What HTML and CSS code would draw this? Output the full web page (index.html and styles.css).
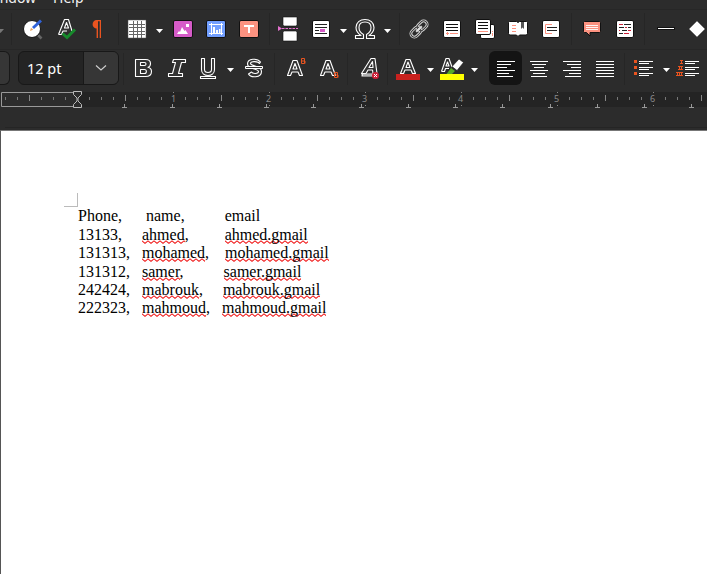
FILE: index.html
```
<!DOCTYPE html>
<html lang="en">
<head>
<meta charset="utf-8">
<title>Writer</title>
<link rel="stylesheet" href="styles.css">
</head>
<body>
<div class="app">
<nav class="menubar"><span class="menu menu-window">Window</span><span class="menu">Help</span></nav>

<div class="toolbar toolbar-standard">
<svg class="arrow" viewBox="-4 9 12 40"><path class="dim" d="M-3 29h7l-3.500 4z"/></svg>
<i class="sep"></i>
<svg class="icon" viewBox="15 9 33 40"><path d="M37 34l4.500 4.500" stroke="#666" stroke-width="2.600"/><circle cx="32" cy="29" r="8.500" fill="#fff" stroke="#151515"/><path d="M33 28l8-7.500" stroke="#2f62d9" stroke-width="3"/><path d="M30 31l1-3.200 2.200 2z" fill="#e9a35c"/></svg>
<svg class="icon" viewBox="48 9 33 40"><path class="out" d="M58.500 34.500L64.500 19.500H68.500L72 31M58.500 34.500H61.500L63 31H67M64.500 28L66.500 22.500L68.500 28Z"/><path d="M62.500 33.500l4.500 4 8-8" fill="none" stroke="#168a2b" stroke-width="3"/></svg>
<svg class="icon wide" viewBox="81 9 34 40"><path d="M101 20v18h-1.300V21.300h-1.700V38h-1.400v-9.500a4 4.250 0 010-8.500z" fill="#e95420"/></svg>
<i class="sep"></i>
<svg class="icon" viewBox="122 9 33 40"><path d="M128 20h18v18h-18z" fill="#fff" stroke="#555" stroke-width=".5"/><path d="M133.500 21v17M137.500 21v17M141.500 21v17M129 24.500h16M129 27.500h16M129 31.500h16M129 34.500h16" stroke="#666"/></svg>
<svg class="arrow" viewBox="155 9 12 40"><path class="lit" d="M156 29h7l-3.500 4z"/></svg>
<svg class="icon" viewBox="167 9 33 40"><rect x="173.500" y="20.500" width="19" height="17" rx="1.500" fill="#d65bc8" stroke="#111"/><path d="M177 34l2-3 1 1 2-5 2.500 4 1-1 2.500 4zM186 24h3v3h-3z" fill="#fff"/></svg>
<svg class="icon" viewBox="200 9 33 40"><rect x="206.500" y="20.500" width="19" height="17" rx="1.500" fill="#729fff" stroke="#111"/><path d="M211.500 23v12M209 33.500h14M209 24.500h14M221.500 23v12" stroke="#fff"/><path d="M213 27h2v6h-2zM216 30h2v3h-2zM219 29h1.500v4H219z" fill="#fff"/></svg>
<svg class="icon" viewBox="233 9 33 40"><rect x="239.500" y="20.500" width="19" height="17" rx="1.500" fill="#fc9280" stroke="#111"/><path d="M244 25h10v2h-4v6h-2v-6h-4z" fill="#fff"/></svg>
<i class="sep"></i>
<svg class="icon" viewBox="273 9 33 40"><path d="M283 17h14v8l-1 1h-12l-1-1zM283 41h14v-9l-1-1h-12l-1 1z" fill="#fff" stroke="#111" stroke-width=".6"/><path d="M278 26l4 2.500-4 2.500z" fill="#e570cf"/><path d="M282 28.500h16" stroke="#e570cf" stroke-dasharray="2.500 1"/></svg>
<svg class="icon" viewBox="306 9 33 40"><rect x="312.500" y="20.500" width="17" height="17" rx="1.500" fill="#fff" stroke="#111"/><path d="M315 24.500h12M315 27.500h12M315 30.500h4M315 33.500h12" stroke="#222"/><path d="M320 29h5v3h-5z" fill="#d65bc8"/></svg>
<svg class="arrow" viewBox="339 9 12 40"><path class="lit" d="M340 29h7l-3.500 4z"/></svg>
<svg class="icon" viewBox="351 9 33 40"><path class="out" d="M355.500 38.500v-3h5.500c-3-2-5-4.500-5-8 0-5 4-8 9-8s9 3 9 8c0 3.500-2 6-5 8h5.500v3h-8v-4c2.800-1.500 4.500-3.800 4.500-7 0-3.500-2.500-5.500-6-5.500s-6 2-6 5.500c0 3.200 1.700 5.500 4.500 7v4z"/></svg>
<svg class="arrow" viewBox="384 9 12 40"><path class="lit" d="M384 29h7l-3.500 4z"/></svg>
<i class="sep"></i>
<svg class="icon" viewBox="403 9 33 40"><g transform="rotate(-45 419 29)" fill="none"><rect x="409" y="25.500" width="11" height="7" rx="3.500" stroke="#ddd" stroke-width="2.800"/><rect x="418" y="25.500" width="11" height="7" rx="3.500" stroke="#ddd" stroke-width="2.800"/><rect x="409" y="25.500" width="11" height="7" rx="3.500" stroke="#333"/><rect x="418" y="25.500" width="11" height="7" rx="3.500" stroke="#333"/><path d="M415 29h8" stroke="#ddd" stroke-width="2"/></g></svg>
<svg class="icon" viewBox="436 9 33 40"><rect x="443.500" y="20.500" width="17" height="17" rx="1.500" fill="#fff" stroke="#111"/><path d="M446 24.500h12M446 27.500h12M446 30.500h12" stroke="#111"/><path d="M446 33.500h3M450 33.500h8M447.500 32v3" stroke="#fc9280"/></svg>
<svg class="icon" viewBox="469 9 33 40"><rect x="480.500" y="24.500" width="14" height="14" rx="1.500" fill="#fff" stroke="#111"/><path d="M492.500 31v5" stroke="#fc9280" stroke-dasharray="1 1 3"/><rect x="475.500" y="19.500" width="15" height="15" rx="1.500" fill="#fff" stroke="#111"/><path d="M478 22.500h10M478 25.500h10M478 28.500h10" stroke="#111"/><path d="M478 31.500h10" stroke="#fc9280"/></svg>
<svg class="icon" viewBox="502 9 33 40"><path d="M508.500 22.500l1-1h7l1.500 1 1.500-1h7l1 1v11l-1 1.500h-7l-1.500 1.500-1.500-1.500h-7l-1-1.500z" fill="#fff" stroke="#111"/><path d="M512 25.500h4M512 28.500h4M512 31.500h4" stroke="#fc9280"/><path d="M521 22h3v7l-1.500-1.500L521 29z" fill="#555"/></svg>
<svg class="icon" viewBox="535 9 33 40"><rect x="542.500" y="20.500" width="17" height="17" rx="1.500" fill="#fff" stroke="#111"/><path d="M552 24.500h-6.500v9h6.500" fill="none" stroke="#fc9280"/><path d="M547 27.500h10M547 30.500h10" stroke="#222"/></svg>
<i class="sep"></i>
<svg class="icon" viewBox="575 9 33 40"><path d="M584.500 21.500h15l1 1v9l-1 1h-9.500v3.500l-3.500-3.500h-2l-1-1v-9z" fill="#fc9280" stroke="#111"/><path d="M586 25.500h12M586 27.500h12M586 29.500h12" stroke="#fff" stroke-width=".9"/></svg>
<svg class="icon" viewBox="608 9 33 40"><rect x="616.500" y="20.500" width="17" height="17" rx="1.500" fill="#fff" stroke="#111"/><path d="M624 24.500h7M619 27.500h5M619 33.500h4M628 27.500h3M622 30.500h5" stroke="#222"/><path d="M619 24.500h4M625 27.500h2M619 30.500h1M628 30.500h3M624 33.500h5" stroke="#cf2038"/></svg>
<i class="sep"></i>
<svg class="icon" viewBox="648 9 33 40"><path d="M657 28.500h18" stroke="#111" stroke-width="3"/><path d="M658 28.500h16" stroke="#fff"/></svg>
<svg class="icon" viewBox="681 9 33 40"><path d="M697 20.500l8.500 8.500-8.500 8.500-8.500-8.500z" fill="#fff" stroke="#111"/></svg>
</div>

<div class="toolbar toolbar-format">
<div class="font-tail"></div>
<div class="size-box"><span class="size-value">12 pt</span><span class="size-drop"><svg width="12" height="8" viewBox="0 0 12 8"><path d="M1 1.500l5 4.500 5-4.500" fill="none" stroke="#ccc" stroke-width="1.200"/></svg></span></div>
<i class="sep"></i>
<svg class="icon" viewBox="127 49 33 40"><path class="out" fill-rule="evenodd" d="M135.500 59.500h10c3.500 0 5 1.500 5 4 0 2-1 3.300-2.500 3.800 2.500.7 3.500 2.200 3.500 4.200 0 3-2 5-6 5h-10zM140.500 62.500v3h4c2 0 2-3 0-3zM140.500 69.500v4h4c2.500 0 2.500-4 0-4z"/></svg>
<svg class="icon" viewBox="160 49 33 40"><path class="out" d="M173.500 59.500h12v3h-4l-3 11h4v3h-14v-3h4l3-11h-3z"/></svg>
<svg class="icon" viewBox="193 49 33 40"><path class="out" d="M201.500 58.500h3v11c0 4 7 4 7 0v-11h3v11c0 8-13 8-13 0zM200.500 76.500h15v2h-15z"/></svg>
<svg class="arrow" viewBox="226 49 12 40"><path class="lit" d="M227 68h7l-3.500 4z"/></svg>
<svg class="icon" viewBox="238 49 33 40"><path class="out" d="M259.500 63.500c-1-2-9-3-9 0s11 1.500 11 8c0 6.500-11 6.500-13 2.500l3-2c1 2 7 2 7-.5 0-3-11-2-11-7.500 0-6 10-6 13-2z"/><path d="M245.500 66.500h17v2h-17z" fill="#333" stroke="#fff"/></svg>
<i class="sep"></i>
<svg class="icon" viewBox="278 49 33 40"><path class="out" d="M287.500 75.500L293 60.500H297L302.500 75.500H299.500L298 72H292L290.500 75.500ZM293 69H297L295 63.500Z"/><path class="mark" d="M301.500 58.500h3v5h-3zM301.500 61h3.500v2.500"/></svg>
<svg class="icon" viewBox="311 49 33 40"><path class="out" d="M320.500 75.500L326 60.500H330L335.500 75.500H332.500L331 72H325L323.500 75.500ZM326 69H330L328 63.500Z"/><path class="mark" d="M334.500 72.500h3v5h-3zM334.500 75h3.500v2.500"/></svg>
<i class="sep"></i>
<svg class="icon" viewBox="351 49 33 40"><path class="out" d="M361.500 73.500L371 58.500H375L377 73.500H373L372.500 70H368L366 73.500ZM369 67.500H373L372.500 61.500Z"/><path d="M361.500 73.500h13v3h-13z" fill="#eee"/><path d="M363 75h11" stroke="#444" stroke-width=".7"/><circle cx="375.500" cy="75.500" r="3.500" fill="#cf2038"/><path d="M374 74l3 3M377 74l-3 3" stroke="#fff"/></svg>
<i class="sep"></i>
<svg class="icon" viewBox="391 49 33 40"><path class="out" d="M400.500 73.500L406 59.500H410L415.500 73.500H412.500L411 70H405L403.500 73.500ZM406 67.500H410L408 62Z"/><path d="M396 74h24v6h-24z" fill="#c9211e"/></svg>
<svg class="arrow" viewBox="424 49 12 40"><path class="lit" d="M427 68h7l-3.500 4z"/></svg>
<svg class="icon" viewBox="436 49 33 40"><path class="out" d="M441.500 71.500L446 58.500H449L452 67M441.500 71.500H444.500L445.500 68.500H449M446 66L447.500 62L449 66Z"/><path d="M440 74h24v6h-24z" fill="#ff0"/><path d="M446.500 74l4.500-6 4 3-3 3z" fill="#57a828"/><path d="M459 59l4.500 3.500-6.500 8-5-4z" fill="#fff" stroke="#111" stroke-width=".6"/></svg>
<svg class="arrow" viewBox="469 49 12 40"><path class="lit" d="M471 68h7l-3.500 4z"/></svg>
<svg class="icon pressed" viewBox="489 51 33 34"><path class="bar" d="M497 61.500h18M497 64.500h14M497 67.500h10M497 70.500h18M497 73.500h12M497 76.500h16"/></svg>
<svg class="icon" viewBox="522 49 33 40"><path class="bar" d="M530 61.500h18M532 64.500h14M534 67.500h10M530 70.500h18M533 73.500h12M531 76.500h16"/></svg>
<svg class="icon" viewBox="555 49 33 40"><path class="bar" d="M563 61.500h18M567 64.500h14M571 67.500h10M563 70.500h18M569 73.500h12M565 76.500h16"/></svg>
<svg class="icon" viewBox="588 49 33 40"><path class="bar" d="M596 61.500h18M596 64.500h18M596 67.500h18M596 70.500h18M596 73.500h18M596 76.500h18"/></svg>
<i class="sep"></i>
<svg class="icon" viewBox="628 49 33 40"><path d="M634 60h3v3h-3zM634 66h3v3h-3zM634 72h3v3h-3z" fill="#e95420"/><path class="bar" d="M639 61.500h14M639 63.500h10M639 67.500h14M639 69.500h10M639 73.500h14M639 75.500h10"/></svg>
<svg class="arrow" viewBox="661 49 12 40"><path class="lit" d="M663 68h7l-3.500 4z"/></svg>
<svg class="icon" viewBox="673 49 33 40"><path d="M680 60.500h3M680 63.500h3M681.500 60v4M678 66.500h5M678 69.500h5M679.500 66v4M681.500 66v4M676 72.500h7M676 75.500h7M677.500 72v4M679.500 72v4M681.500 72v4" stroke="#e95420"/><path class="bar" d="M685 61.500h14M685 63.500h10M685 67.500h14M685 69.500h10M685 73.500h14M685 75.500h10"/></svg>
</div>

<svg class="ruler" viewBox="0 89 707 41">
<defs>
<pattern id="minor" x="5" y="0" width="12" height="200" patternUnits="userSpaceOnUse"><path d="M0 97h1v3H0z" fill="#777"/></pattern>
<g id="half"><path d="M.5 95v6" stroke="#888"/></g>
<g id="stop"><path d="M.5 104v3M-2 107.500h5" stroke="#999"/></g>
</defs>
<path d="M78 92h629v15H78z" fill="#242424"/>
<path d="M1.500 92.500H77M1.500 92.500v14M1.500 106.500H77" stroke="#999" fill="none"/>
<path d="M5 96h67v5H5zM89 96h80v5H89zM178 96h86v5h-86zM274 96h86v5h-86zM370 96h86v5h-86zM466 96h86v5h-86zM562 96h86v5h-86zM658 96h49v5h-49z" fill="url(#minor)"/>
<use href="#half" x="29"/><use href="#half" x="125"/><use href="#half" x="221"/><use href="#half" x="317"/><use href="#half" x="413"/><use href="#half" x="509"/><use href="#half" x="605"/><use href="#half" x="701"/>
<use href="#stop" x="124"/><use href="#stop" x="172"/><use href="#stop" x="219"/><use href="#stop" x="266"/><use href="#stop" x="313"/><use href="#stop" x="361"/><use href="#stop" x="408"/><use href="#stop" x="455"/><use href="#stop" x="502"/><use href="#stop" x="550"/><use href="#stop" x="597"/><use href="#stop" x="644"/><use href="#stop" x="691"/>
<path d="M173.500 92v1M269.500 92v1M365.500 92v1M461.500 92v1M557.500 92v1M653.500 92v1M269.500 105v1M365.500 105v1M461.500 105v1M557.500 105v1M653.500 105v1" stroke="#888"/>
<g class="ruler-num"><text x="173.500" y="102">1</text><text x="268.500" y="102">2</text><text x="364.500" y="102">3</text><text x="460.500" y="102">4</text><text x="556.500" y="102">5</text><text x="652.500" y="102">6</text></g>
<path d="M73.500 91.500h8v3l-3.500 3.500v3l3.500 3.500v3h-8v-3l3.500-3.500v-3l-3.500-3.500z" fill="#2c2c2c" stroke="#bbb"/>
<path d="M5 127.500h702" stroke="#252525"/>
</svg>

<main class="page">
<div class="margin-corner"></div>
<div class="text">
<p class="line">Phone,      name,          email</p>
<p class="line tall">13133,     <u>ahmed</u>,         <u>ahmed.gmail</u></p>
<p class="line">131313,   <u>mohamed</u>,    <u>mohamed.gmail</u></p>
<p class="line tall">131312,   <u>samer</u>,          <u>samer.gmail</u></p>
<p class="line">242424,   <u>mabrouk</u>,     <u>mabrouk.gmail</u></p>
<p class="line">222323,   <u>mahmoud</u>,   <u>mahmoud.gmail</u></p>
</div>
</main>
</div>
</body>
</html>
```
FILE: styles.css
```
* { box-sizing: border-box; }
body { margin: 0; background: #2c2c2c; overflow: hidden; }
.app { width: 707px; height: 574px; overflow: hidden; display: flex; flex-direction: column; }
svg { display: block; flex: none; }

.menubar {
  height: 9px; flex: none; overflow: hidden; display: flex; align-items: flex-end; gap: 17px;
  font: 14px/20px "Noto Sans", sans-serif; color: #f2f2f2;
}
.menu { margin-bottom: 1px; }
.menu-window { margin-left: -17px; }

.toolbar { display: flex; align-items: center; flex: none; height: 40px; box-shadow: inset 0 1px #272727; }
.toolbar-standard > :first-child { margin-left: -4px; }
.icon { width: 33px; height: 40px; }
.wide { width: 34px; }
.arrow { width: 12px; height: 40px; }
.sep { flex: none; width: 7px; height: 32px; border-left: 3px solid transparent; background: linear-gradient(#262626, #262626) 0 0 / 1px 100% no-repeat; background-origin: padding-box; }

.lit { fill: #fff; }
.dim { fill: #777; }
.out { fill: #333; stroke: #fff; stroke-width: 1.1; stroke-linejoin: round; }
.mark { fill: none; stroke: #e95420; }
.bar { fill: none; stroke: #fff; }
.pressed { height: 34px; margin-left: 8px; margin-top: -2px; background: #141414; border-radius: 6px; }

.font-tail { flex: none; width: 10px; height: 34px; margin: -2px 8px 0 0; background: #363636; border: 1px solid #181818; border-left: 0; border-radius: 0 6px 6px 0; }
.size-box { flex: none; display: flex; width: 101px; height: 34px; margin: -2px 1px 0 0; border: 1px solid #181818; border-radius: 6px; background: #242424; overflow: hidden; }
.size-value { width: 64px; padding-left: 8px; color: #fff; font: 14.5px/32px "Noto Sans", sans-serif; }
.size-drop { flex: 1; display: flex; align-items: center; justify-content: center; background: #363636; border-left: 1px solid #181818; }

.ruler { width: 707px; height: 41px; }
.ruler-num { font: 9px "Noto Sans", sans-serif; fill: #8a8a8a; text-anchor: middle; }

.page { flex: 1; background: #fff; border-top: 1px solid #777; border-left: 1px solid #555; padding: 62px 0 0 63px; }
.margin-corner { width: 14px; height: 14px; border-right: 1px solid #bbb; border-bottom: 1px solid #bbb; }
.text { margin-left: 14px; color: #000; font: 16px/18px "Liberation Serif", serif; }
.line { margin: 0; white-space: pre; }
.tall { padding-top: 1px; }
.line u {
  text-decoration: none; padding-bottom: 1px;
  background: url("data:image/svg+xml,%3Csvg xmlns='http://www.w3.org/2000/svg' width='6' height='4'%3E%3Cpath d='M-1 -.2L0 .8L3 3.300L6 .8L7 -.2' fill='none' stroke='%23f01818' stroke-width='1.100'/%3E%3C/svg%3E") 0 100% / 6px 4px repeat-x;
}
```
